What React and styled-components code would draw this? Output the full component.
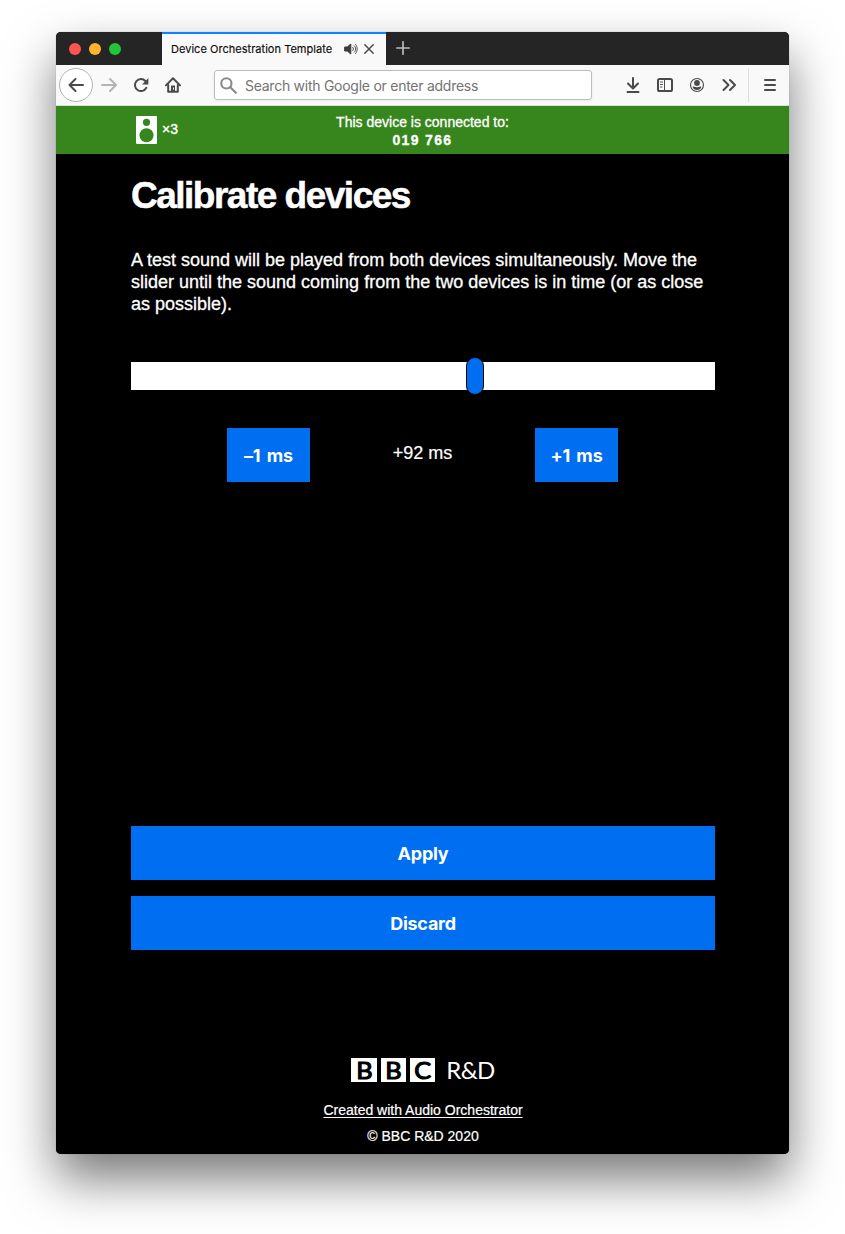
import React from 'react';
import styled, { createGlobalStyle } from 'styled-components';

const sans = '"Liberation Sans", Arial, sans-serif';
const ui = 'Inter, "Open Sans", sans-serif';

const GlobalStyle = createGlobalStyle`
  * { box-sizing: border-box; }
  body { margin: 0; background: #fff; font-family: ${sans}; }
  p, h1 { margin: 0; }
  svg { display: block; flex: none; }
`;

const Desktop = styled.div`
  height: 1234px;
  padding: 32px 56px 80px;
  overflow: hidden;
`;

const BrowserWindow = styled.div`
  height: 1122px;
  display: flex;
  flex-direction: column;
  border-radius: 5px;
  overflow: hidden;
  background: #000;
  box-shadow: 0 0 1px rgba(0, 0, 0, 0.45), 0 25px 50px rgba(0, 0, 0, 0.53);
`;

const TabBar = styled.div`
  height: 33px;
  flex: none;
  display: flex;
  background: #252525;
`;

const TrafficLights = styled.div`
  width: 106px;
  padding-left: 13px;
  display: flex;
  align-items: center;
  gap: 8px;
`;

const Light = styled.span`
  width: 12px;
  height: 12px;
  margin-top: 1px;
  border-radius: 50%;
  background: ${(p) => p.$color};
`;

const Tab = styled.div`
  width: 224px;
  padding: 0 11px 2px 9px;
  display: flex;
  align-items: center;
  border-top: 2px solid #0a84ff;
  background: #f9f9fa;
  color: #0c0c0d;
`;

const TabTitle = styled.span`
  flex: 1;
  font: 11px/14px ${ui};
  letter-spacing: 0.03px;
  white-space: nowrap;
  -webkit-text-stroke: 0.15px;
`;

const TabIcons = styled.div`
  display: flex;
  align-items: center;
  gap: 5px;
`;

const NewTab = styled.div`
  padding: 9px 0 0 10px;
`;

const Toolbar = styled.div`
  height: 41px;
  flex: none;
  display: flex;
  align-items: center;
  background: #f9f9fa;
  border-bottom: 1px solid #dcdcdc;
  color: #4a4a4b;
`;

const BackButton = styled.div`
  width: 34px;
  height: 34px;
  margin-left: 3px;
  display: grid;
  place-items: center;
  border: 1px solid #b4b4b5;
  border-radius: 50%;
  background: #fff;
`;

const NavIcons = styled.div`
  display: flex;
  gap: 16px;
  margin-left: 8px;
`;

const AddressBar = styled.div`
  width: 378px;
  height: 30px;
  margin-left: 33px;
  padding-left: 5px;
  display: flex;
  align-items: center;
  gap: 8px;
  border: 1px solid #bdbdbe;
  border-radius: 3px;
  background: #fff;
  color: #737374;
  box-shadow: 0 1px 3px rgba(0, 0, 0, 0.06);
`;

const Placeholder = styled.span`
  padding-top: 2px;
  font: 14px/18px ${ui};
  letter-spacing: -0.26px;
  white-space: nowrap;
`;

const ToolIcons = styled.div`
  display: flex;
  gap: 16px;
  margin-left: 33px;
`;

const MenuButton = styled.div`
  height: 34px;
  margin-left: 11px;
  padding-left: 13px;
  display: flex;
  align-items: center;
  border-left: 1px solid #dededf;
`;

const StatusBar = styled.div`
  height: 48px;
  flex: none;
  padding: 0 75px;
  display: grid;
  grid-template-columns: 1fr auto 1fr;
  background: #37861d;
  color: #fff;
`;

const Devices = styled.div`
  display: flex;
  align-items: center;
  gap: 5px;
  padding-left: 5px;
  font-size: 14px;
  -webkit-text-stroke: 0.4px;

  span { margin-top: -2px; }
`;

const Connection = styled.div`
  padding-top: 7px;
  text-align: center;
  font-size: 14px;
  line-height: 18px;
  -webkit-text-stroke: 0.3px;
`;

const SessionCode = styled.div`
  font-weight: bold;
  letter-spacing: 1.35px;
`;

const Page = styled.main`
  flex: 1;
  padding: 0 74px 0 75px;
  display: flex;
  flex-direction: column;
  background: #000;
  color: #fff;
`;

const Title = styled.h1`
  margin-top: 21px;
  font-size: 37px;
  line-height: 42px;
  letter-spacing: -1.5px;
  white-space: nowrap;
  -webkit-text-stroke: 0.5px;
`;

const Intro = styled.p`
  margin-top: 32px;
  font-size: 18px;
  line-height: 22px;
  white-space: nowrap;
  -webkit-text-stroke: 0.3px;
`;

const Slider = styled.div`
  height: 28px;
  margin-top: 47px;
  display: flex;
  align-items: center;
  background: #fff;
`;

const Thumb = styled.div`
  width: 18px;
  height: 38px;
  margin: -5px 0 -5px 335px;
  flex: none;
  border: 1px solid #000;
  border-radius: 9px;
  background: #006ef0;
`;

const Adjust = styled.div`
  margin: 38px 97px 0 96px;
  display: flex;
  justify-content: space-between;
`;

const Value = styled.span`
  padding-top: 14px;
  font-size: 18px;
  line-height: 22px;
  -webkit-text-stroke: 0.2px;
`;

const Button = styled.button`
  width: ${(p) => p.$width || '100%'};
  height: 54px;
  padding: 1px 0 0;
  border: 0;
  background: #006ef0;
  color: #fff;
  font: 700 18px/22px ${ui};
  letter-spacing: ${(p) => p.$spacing || '-0.25px'};
  word-spacing: ${(p) => p.$wordSpacing || '0'};
`;

const Actions = styled.div`
  margin-top: 344px;
  display: flex;
  flex-direction: column;
  gap: 16px;
`;

const Footer = styled.footer`
  margin-top: 108px;
  display: flex;
  flex-direction: column;
  align-items: center;
  font-size: 14px;
  line-height: 18px;
  -webkit-text-stroke: 0.2px;
`;

const Logo = styled.div`
  display: flex;
  align-items: center;
  gap: 4px;
  height: 24px;
  margin-bottom: 19px;
  -webkit-text-stroke: 0;
`;

const LogoBlock = styled.span`
  width: 25.3px;
  height: 24px;
  background: #fff;
  color: #000;
  text-align: center;
  font: 400 23px/24px Lato, sans-serif;
  -webkit-text-stroke: 1.1px;
`;

const LogoLetter = styled.span`
  display: inline-block;
  transform: scaleX(1.1);
`;

const LogoName = styled.span`
  margin-left: 7px;
  font: 24px/22px Lato, sans-serif;
  letter-spacing: -0.7px;
`;

const CreatedLink = styled.a`
  color: #fff;
  text-decoration: underline;
  text-underline-offset: 2px;
`;

const Copyright = styled.p`
  margin-top: 8px;
`;

function Icon({ children, size = 16, width = 2, color = 'currentColor' }) {
  return (
    <svg width={size} height={size} viewBox="0 0 16 16" fill="none" stroke={color}
      strokeWidth={width} strokeLinecap="round" strokeLinejoin="round">{children}</svg>
  );
}

export default function App() {
  return (
    <Desktop>
      <GlobalStyle />
      <BrowserWindow>
        <TabBar>
          <TrafficLights>
            <Light $color="#ff5550" />
            <Light $color="#ffb42c" />
            <Light $color="#23c63a" />
          </TrafficLights>
          <Tab>
            <TabTitle>Device Orchestration Template</TabTitle>
            <TabIcons>
              <svg width="14" height="14" viewBox="0 0 14 14" fill="none" stroke="#3d3d3e" strokeLinecap="round">
                <path d="M1 5h2.200L6.800 2v10L3.200 9H1z" fill="#3d3d3e" strokeLinejoin="round" />
                <path d="M8.700 5.300c1 .8 1 2.600 0 3.400M10.300 3.800c1.800 1.500 1.800 4.900 0 6.400M11.600 2.500c2.200 2.200 2.200 6.800 0 9" strokeWidth=".9" />
              </svg>
              <svg width="12" height="12" viewBox="0 0 12 12" stroke="#4a4a4b" strokeWidth="1.5" strokeLinecap="round">
                <path d="M1.800 1.800l8.400 8.400M10.200 1.800l-8.400 8.400" />
              </svg>
            </TabIcons>
          </Tab>
          <NewTab>
            <svg width="14" height="14" viewBox="0 0 14 14" stroke="#bdbdbd" strokeWidth="1.7" strokeLinecap="round">
              <path d="M7 .8v12.400M.8 7h12.400" />
            </svg>
          </NewTab>
        </TabBar>
        <Toolbar>
          <BackButton>
            <Icon><path d="M15 8H1.500M7.500 2l-6 6 6 6" /></Icon>
          </BackButton>
          <NavIcons>
            <Icon color="#b3b3b4"><path d="M1 8h14M9 2l6 6-6 6" /></Icon>
            <Icon>
              <path d="M13.300 10.800A6 6 0 1 1 12.400 4" />
              <path d="M15.400 1v6.400H9z" fill="currentColor" stroke="none" />
            </Icon>
            <Icon>
              <path d="M1 8.400L8 1.300l7 7.100" />
              <path d="M3.200 8v6.800h9.600V8" />
              <path d="M6 8.500h4V15H6z" fill="currentColor" stroke="none" />
              <path d="M8.500 11v1.200" stroke="#f9f9fa" strokeWidth="1" />
            </Icon>
          </NavIcons>
          <AddressBar>
            <Icon size={17} color="#8a8a8b"><circle cx="6" cy="6" r="4.800" /><path d="M9.700 9.700l5.200 5.200" /></Icon>
            <Placeholder>Search with Google or enter address</Placeholder>
          </AddressBar>
          <ToolIcons>
            <Icon><path d="M8 1v10M3 6.500l5 5 5-5M2.500 15h11" /></Icon>
            <Icon>
              <rect x="1" y="2" width="14" height="12" rx="1.600" />
              <path d="M7.500 2v12M3.500 5h2M3.500 7.500h2M3.500 10h1.500" strokeWidth="1" />
            </Icon>
            <Icon width={1.1}>
              <circle cx="8" cy="8" r="6.500" />
              <circle cx="8" cy="6" r="2.900" fill="currentColor" stroke="none" />
              <path d="M3.700 9.300c1.200 0 1.600 1 4.300 1s3.100-1 4.300-1c0 2.200-1.700 3.700-4.300 3.700s-4.300-1.500-4.300-3.700z" fill="currentColor" stroke="none" />
            </Icon>
            <Icon><path d="M2.500 3l5 5-5 5M9 3l5 5-5 5" /></Icon>
          </ToolIcons>
          <MenuButton>
            <Icon><path d="M3 3h10M3 8h10M3 13h10" /></Icon>
          </MenuButton>
        </Toolbar>
        <StatusBar>
          <Devices>
            <svg width="21" height="28" viewBox="0 0 21 28">
              <rect width="21" height="28" rx="1" fill="#fff" />
              <circle cx="10.500" cy="6.300" r="3.600" fill="#37861d" />
              <circle cx="10.500" cy="19.300" r="7" fill="#37861d" />
            </svg>
            <span>×3</span>
          </Devices>
          <Connection>
            This device is connected to:
            <SessionCode>019 766</SessionCode>
          </Connection>
        </StatusBar>
        <Page>
          <Title>Calibrate devices</Title>
          <Intro>
            A test sound will be played from both devices simultaneously. Move the<br />
            slider until the sound coming from the two devices is in time (or as close<br />
            as possible).
          </Intro>
          <Slider><Thumb /></Slider>
          <Adjust>
            <Button $width="83px" $spacing="-0.1px" $wordSpacing="2px">–1 ms</Button>
            <Value>+92 ms</Value>
            <Button $width="83px" $spacing="-0.1px" $wordSpacing="2px">+1 ms</Button>
          </Adjust>
          <Actions>
            <Button>Apply</Button>
            <Button>Discard</Button>
          </Actions>
          <Footer>
            <Logo>
              <LogoBlock><LogoLetter>B</LogoLetter></LogoBlock>
              <LogoBlock><LogoLetter>B</LogoLetter></LogoBlock>
              <LogoBlock><LogoLetter>C</LogoLetter></LogoBlock>
              <LogoName>R&amp;D</LogoName>
            </Logo>
            <CreatedLink>Created with Audio Orchestrator</CreatedLink>
            <Copyright>© BBC R&amp;D 2020</Copyright>
          </Footer>
        </Page>
      </BrowserWindow>
    </Desktop>
  );
}
